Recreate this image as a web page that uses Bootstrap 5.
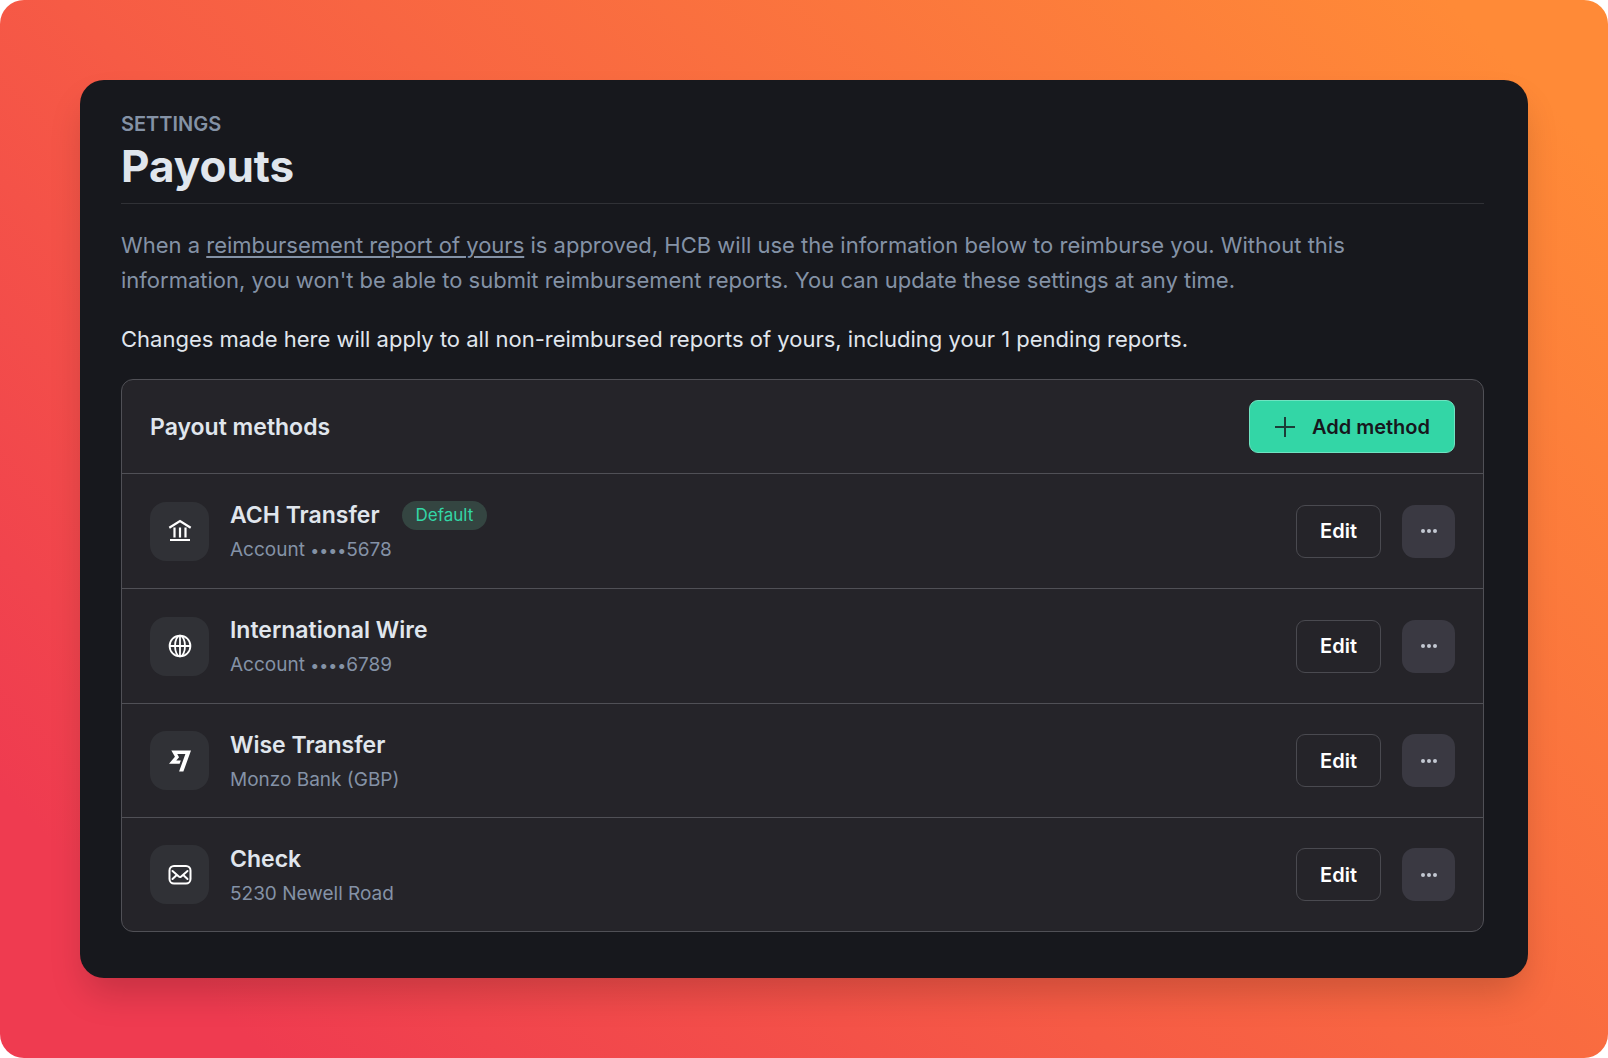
<!DOCTYPE html>
<html lang="en">
<head>
<meta charset="utf-8">
<meta name="viewport" content="width=device-width, initial-scale=1">
<title>Payouts · Settings</title>
<link rel="stylesheet" href="https://cdn.jsdelivr.net/npm/bootstrap@5.3.0/dist/css/bootstrap.min.css">
<style>
  :root { --ink: #e0e6ed; --muted: #8492a6; --panel: #252429; --line: #505056; }
  body { font-family: Inter, "Liberation Sans", sans-serif; background: #fff; color: var(--ink); }
  .backdrop { padding: 80px; border-radius: 24px; background: linear-gradient(45deg, #ef3b50 10%, #f65b45 42%, #ff8a37 94%); }
  .window { padding: 32px 44px 46px 41px; border-radius: 24px; background: #17181d; box-shadow: 0 20px 36px -6px rgba(0, 0, 0, .18); }
  .eyebrow { font-size: 20px; line-height: 24px; font-weight: 600; color: var(--muted); }
  .page-title { font-size: 44px; line-height: 54px; font-weight: 700; padding: 3px 0 10px; border-bottom: 1px solid #303136; }
  .copy { max-width: 1290px; font-size: 22px; line-height: 35px; }
  .soft { color: var(--muted); }
  .copy a { color: inherit; text-underline-offset: 3px; text-decoration-thickness: 2px; }
  .methods { margin-top: 22px; background: var(--panel); border: 1px solid var(--line); border-radius: 12px; color: var(--ink); }
  .methods-head { padding: 20px 28px; border-bottom: 1px solid var(--line); }
  .method { padding: 26px 28px; gap: 21px; background: transparent; color: inherit; border-color: var(--line); }
  .name { font-size: 23px; line-height: 30px; font-weight: 600; }
  .name-row { gap: 22px; }
  .detail { font-size: 19px; line-height: 23px; color: var(--muted); }
  .dots { font-size: 16px; }
  .glyph { width: 59px; height: 59px; border-radius: 16px; background: #303136; color: #fff; }
  .btn { --bs-btn-font-size: 20px; --bs-btn-font-weight: 600; --bs-btn-line-height: 24px; height: 53px; --bs-btn-border-radius: 9px; }
  .btn-add { --bs-btn-bg: #33d6a6; --bs-btn-color: #17171d; --bs-btn-border-color: #6fe3c1; --bs-btn-hover-bg: #2cc497; --bs-btn-padding-x: 24px; gap: 16px; }
  .btn-edit { --bs-btn-color: #fff; --bs-btn-border-color: #4a4a50; --bs-btn-hover-color: #fff; --bs-btn-hover-border-color: #8492a6; --bs-btn-padding-x: 23px; }
  .btn-more { --bs-btn-bg: #3a3942; --bs-btn-color: #c3c9d2; --bs-btn-hover-bg: #4a4953; width: 53px; --bs-btn-padding-x: 0; --bs-btn-border-radius: 13px; }
  .tag { padding: 0 14px; border-radius: 15px; font-size: 17px; line-height: 29px; font-weight: 400; color: #33d6a6; background: #344541; }
</style>
<script src="https://cdn.jsdelivr.net/npm/bootstrap@5.3.0/dist/js/bootstrap.bundle.min.js"></script>
</head>
<body>
<div class="backdrop">
  <main class="window">
    <header>
      <div class="eyebrow text-uppercase">Settings</div>
      <h1 class="page-title mb-4">Payouts</h1>
    </header>
    <p class="copy soft mb-4">When a <a href="#reports">reimbursement report of yours</a> is approved, HCB will use the information below to reimburse you. Without this information, you won't be able to submit reimbursement reports. You can update these settings at any time.</p>
    <p class="copy mb-0">Changes made here will apply to all non-reimbursed reports of yours, including your 1 pending reports.</p>

    <section class="methods" aria-labelledby="methods-title">
      <div class="methods-head d-flex align-items-center justify-content-between">
        <h2 class="name mb-0" id="methods-title">Payout methods</h2>
        <button type="button" class="btn btn-add d-flex align-items-center">
          <svg width="22" height="22" viewBox="0 0 22 22" fill="none" stroke="currentColor" stroke-width="2" opacity=".8" aria-hidden="true"><path d="M11 1v20M1 11h20"/></svg>
          Add method
        </button>
      </div>
      <ul class="list-group list-group-flush">
        <li class="list-group-item method d-flex align-items-center">
          <span class="glyph d-flex align-items-center justify-content-center flex-shrink-0">
            <svg width="24" height="24" viewBox="0 0 24 24" fill="none" stroke="currentColor" stroke-width="2.200" aria-hidden="true"><path d="M1.300 8.700 12 2l10.700 6.700M2 21h20M6.500 8.500v10M12 8.500v10M17.500 8.500v10"/></svg>
          </span>
          <div class="me-auto">
            <div class="name-row d-flex align-items-center"><span class="name">ACH Transfer</span><span class="tag">Default</span></div>
            <div class="detail mt-2">Account <span class="dots">••••</span>5678</div>
          </div>
          <button type="button" class="btn btn-edit">Edit</button>
          <button type="button" class="btn btn-more" aria-label="More options"><svg width="18" height="6" viewBox="0 0 18 6" fill="currentColor" class="d-block mx-auto"><circle cx="3" cy="3" r="2"/><circle cx="9" cy="3" r="2"/><circle cx="15" cy="3" r="2"/></svg></button>
        </li>
        <li class="list-group-item method d-flex align-items-center">
          <span class="glyph d-flex align-items-center justify-content-center flex-shrink-0">
            <svg width="24" height="24" viewBox="0 0 24 24" fill="none" stroke="currentColor" stroke-width="1.800" aria-hidden="true"><circle cx="12" cy="12" r="10.400"/><ellipse cx="12" cy="12" rx="5" ry="10.400"/><path d="M12 1.600v20.800M1.600 12h20.800"/></svg>
          </span>
          <div class="me-auto">
            <div class="name">International Wire</div>
            <div class="detail mt-2">Account <span class="dots">••••</span>6789</div>
          </div>
          <button type="button" class="btn btn-edit">Edit</button>
          <button type="button" class="btn btn-more" aria-label="More options"><svg width="18" height="6" viewBox="0 0 18 6" fill="currentColor" class="d-block mx-auto"><circle cx="3" cy="3" r="2"/><circle cx="9" cy="3" r="2"/><circle cx="15" cy="3" r="2"/></svg></button>
        </li>
        <li class="list-group-item method d-flex align-items-center">
          <span class="glyph d-flex align-items-center justify-content-center flex-shrink-0">
            <svg width="22" height="22" viewBox="0 0 24 24" fill="currentColor" aria-hidden="true"><path d="M6.488 7.469 0 15.050h11.585l1.301-3.576H7.922l3.033-3.507.01-.092L8.993 4.480h8.873l-6.878 18.925h4.706L24 .595H2.543l3.945 6.874Z"/></svg>
          </span>
          <div class="me-auto">
            <div class="name">Wise Transfer</div>
            <div class="detail mt-2">Monzo Bank (GBP)</div>
          </div>
          <button type="button" class="btn btn-edit">Edit</button>
          <button type="button" class="btn btn-more" aria-label="More options"><svg width="18" height="6" viewBox="0 0 18 6" fill="currentColor" class="d-block mx-auto"><circle cx="3" cy="3" r="2"/><circle cx="9" cy="3" r="2"/><circle cx="15" cy="3" r="2"/></svg></button>
        </li>
        <li class="list-group-item method d-flex align-items-center">
          <span class="glyph d-flex align-items-center justify-content-center flex-shrink-0">
            <svg width="24" height="24" viewBox="0 0 24 24" fill="none" stroke="currentColor" stroke-width="2" stroke-linejoin="round" stroke-linecap="round" aria-hidden="true"><rect x="1.500" y="3" width="21" height="17.500" rx="4.500"/><path d="M4.500 8 10.800 13.500a1.800 1.800 0 0 0 2.400 0L19.500 8M4.500 16l4-3.800M19.500 16l-4-3.800"/></svg>
          </span>
          <div class="me-auto">
            <div class="name">Check</div>
            <div class="detail mt-2">5230 Newell Road</div>
          </div>
          <button type="button" class="btn btn-edit">Edit</button>
          <button type="button" class="btn btn-more" aria-label="More options"><svg width="18" height="6" viewBox="0 0 18 6" fill="currentColor" class="d-block mx-auto"><circle cx="3" cy="3" r="2"/><circle cx="9" cy="3" r="2"/><circle cx="15" cy="3" r="2"/></svg></button>
        </li>
      </ul>
    </section>
  </main>
</div>
</body>
</html>
